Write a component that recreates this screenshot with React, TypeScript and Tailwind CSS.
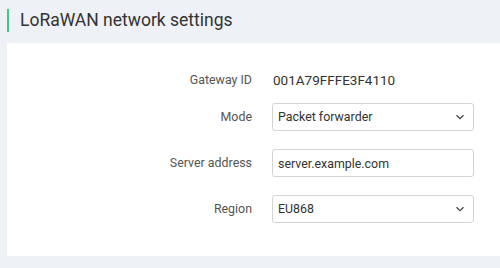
import React from 'react';

const font = { fontFamily: 'Roboto, "Liberation Sans", sans-serif' };

const Chevron = () => (
  <svg width="10" height="6" viewBox="0 0 10 6" className="absolute right-[9px] top-1/2 -translate-y-1/2 pointer-events-none">
    <path d="M1.5 1.2 L5 4.6 L8.5 1.2" fill="none" stroke="#444" strokeWidth="1.3" />
  </svg>
);

const Row = ({ label, children, className = '' }: { label: string; children: React.ReactNode; className?: string }) => (
  <div className={`grid grid-cols-[245px_202px] gap-x-[20px] items-center ${className}`}>
    <div className="text-right text-[12.4px] text-[#555]">{label}</div>
    <div>{children}</div>
  </div>
);

const SelectBox = ({ value }: { value: string }) => (
  <div className="relative">
    <select
      defaultValue={value}
      className="appearance-none w-full h-[28px] border border-[#d4d4d4] rounded-[3px] bg-white pl-[5px] text-[12.4px] text-[#333] outline-none"
      style={font}
    >
      <option>{value}</option>
    </select>
    <Chevron />
  </div>
);

export default function App() {
  return (
    <div className="w-[500px] h-[268px] bg-[#eef1f6] pl-[7px] overflow-hidden" style={font}>
      <div className="pt-[9px] h-[43px]">
        <div className="flex items-center h-[23px] border-l-2 border-[#3cc987] pl-[11px]">
          <h1 className="text-[17.5px] text-[#333] leading-none">LoRaWAN network settings</h1>
        </div>
      </div>
      <div className="bg-white h-[213px] pt-[25px]">
        <Row label="Gateway ID" className="h-[20px]">
          <span className="text-[13.5px] text-[#333] pl-[1px]">001A79FFFE3F4110</span>
        </Row>
        <Row label="Mode" className="mt-[15px]">
          <SelectBox value="Packet forwarder" />
        </Row>
        <Row label="Server address" className="mt-[18px]">
          <input
            defaultValue="server.example.com"
            className="w-full h-[28px] border border-[#d4d4d4] rounded-[3px] bg-white pl-[5px] text-[12.4px] text-[#333] outline-none"
            style={font}
          />
        </Row>
        <Row label="Region" className="mt-[18px]">
          <SelectBox value="EU868" />
        </Row>
      </div>
    </div>
  );
}
